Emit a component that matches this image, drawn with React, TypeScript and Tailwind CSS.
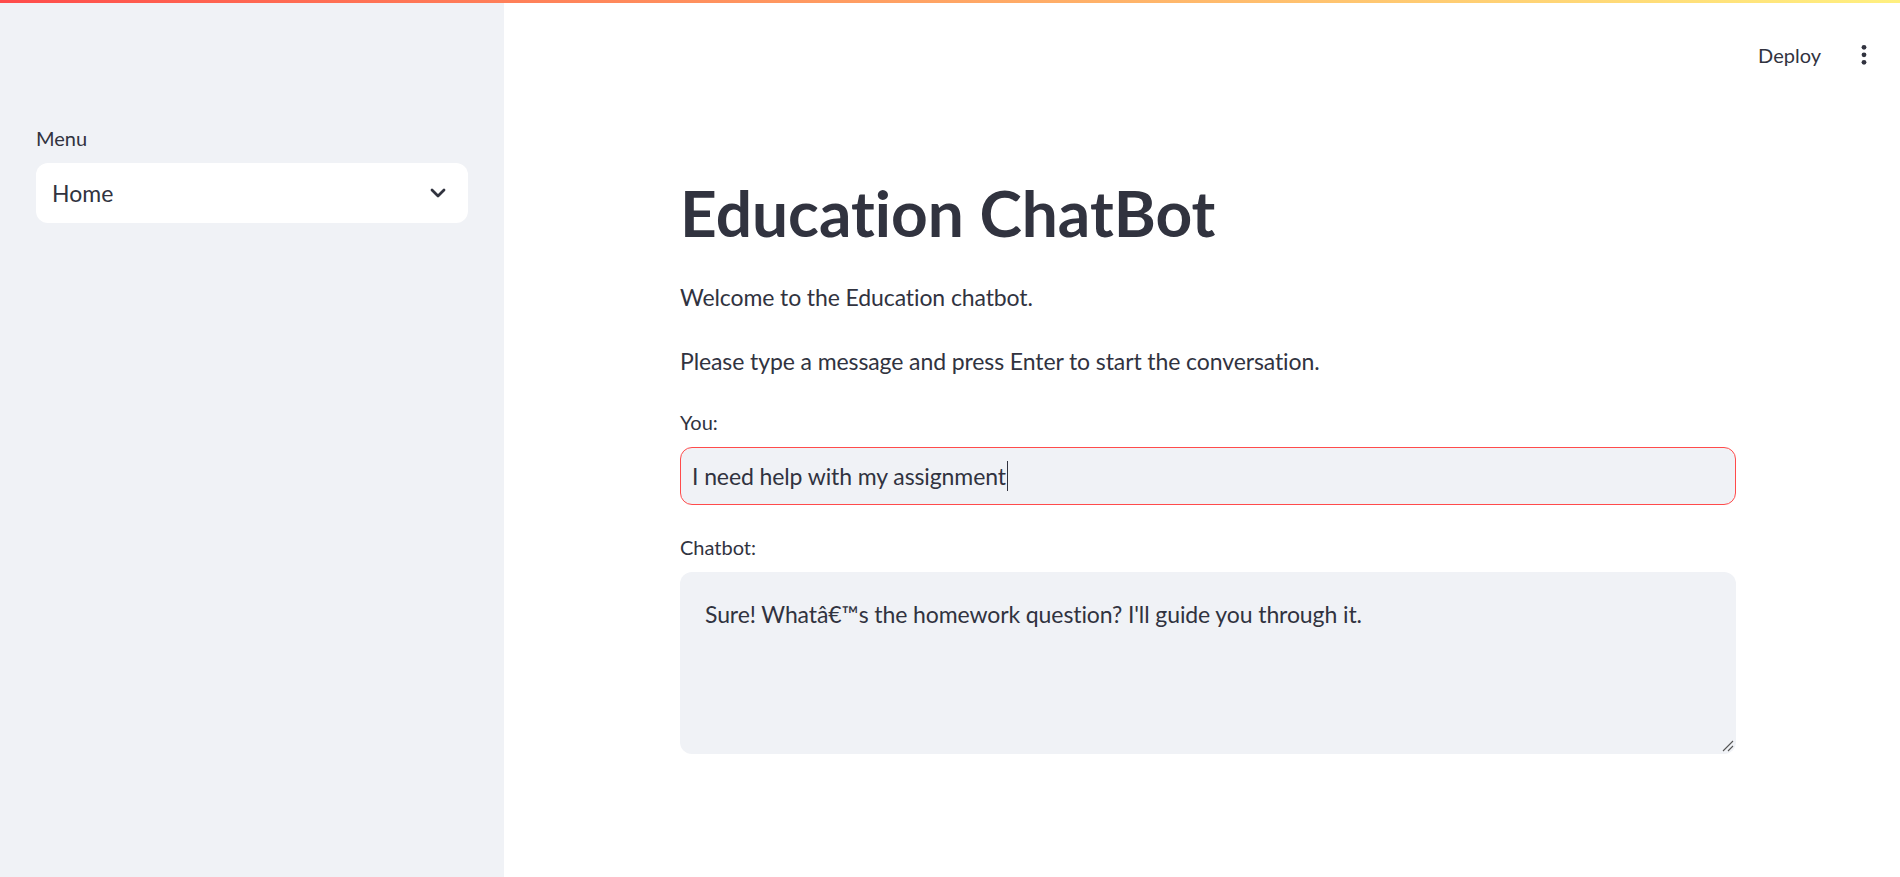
import React from "react";

const FONT = { fontFamily: "Lato, 'Noto Sans', sans-serif" };

function Chevron() {
  return (
    <svg width="16" height="11" viewBox="0 0 16 11" fill="none">
      <path d="M2 2 L8 8 L14 2" stroke="#31333f" strokeWidth="2.8" strokeLinecap="round" strokeLinejoin="round" />
    </svg>
  );
}

function Kebab() {
  return (
    <svg width="6" height="22" viewBox="0 0 6 22" fill="#31333f">
      <circle cx="3" cy="3.3" r="2.4" />
      <circle cx="3" cy="10.8" r="2.4" />
      <circle cx="3" cy="18.3" r="2.4" />
    </svg>
  );
}

function Grip() {
  return (
    <svg width="12" height="12" viewBox="0 0 12 12" fill="none">
      <path d="M1 11 L11 1" stroke="#555" strokeWidth="1.1" />
      <path d="M6 11 L11 6" stroke="#555" strokeWidth="1.1" />
    </svg>
  );
}

export default function App() {
  return (
    <div
      className="relative flex h-[877px] w-full overflow-hidden bg-white text-[#31333f] [font-variant-ligatures:none]"
      style={FONT}
    >
      <div className="absolute left-0 right-0 top-0 z-10 h-[3px] bg-gradient-to-r from-[#ff4b4b] to-[#fff080]" />

      <aside className="flex w-[504px] shrink-0 flex-col bg-[#f0f2f6] px-[36px] pt-[124px]">
        <div className="h-[28px] text-[20px] leading-[28px]">Menu</div>
        <div className="mt-[11px] flex h-[60px] w-[432px] items-center justify-between rounded-[12px] bg-white pl-[16px] pr-[22px]">
          <span className="text-[23px] leading-[30px]">Home</span>
          <Chevron />
        </div>
      </aside>

      <main className="flex flex-1 flex-col">
        <header className="flex h-[110px] shrink-0 items-center justify-end pr-[33px]">
          <span className="mr-[40px] text-[20px] leading-[28px]">Deploy</span>
          <Kebab />
        </header>

        <div className="flex justify-center pl-[12px]">
          <div className="flex w-[1056px] flex-col pt-[64px]">
            <h1 className="text-[64px] font-bold leading-[78px] [font-variant-ligatures:none]">Education ChatBot</h1>
            <p className="mt-[27px] text-[23px] leading-[36px] tracking-[-0.1px]">Welcome to the Education chatbot.</p>
            <p className="mt-[28px] text-[23px] leading-[36px] tracking-[-0.1px]">
              Please type a message and press Enter to start the conversation.
            </p>

            <div className="mt-[29px] h-[28px] text-[20px] leading-[28px]">You:</div>
            <div className="mt-[11px] flex h-[58px] items-center rounded-[12px] border border-[#ff4b4b] bg-[#f0f2f6] pl-[11px]">
              <span className="text-[23px] leading-[36px] tracking-[-0.1px]">I need help with my assignment</span>
              <span className="ml-[1px] h-[30px] w-[1px] bg-[#31333f]" />
            </div>

            <div className="mt-[28px] h-[28px] text-[20px] leading-[28px]">Chatbot:</div>
            <div className="relative mt-[11px] h-[182px] w-full">
              <textarea
                readOnly
                className="block h-full w-full resize-none rounded-[12px] bg-[#f0f2f6] px-[25px] pt-[24px] text-[23px] leading-[36px] tracking-[-0.1px] text-[#31333f] outline-none [font-variant-ligatures:none]"
                style={FONT}
                value={"Sure! Whatâ€™s the homework question? I'll guide you through it."}
              />
              <div className="pointer-events-none absolute bottom-[2px] right-[2px]">
                <Grip />
              </div>
            </div>
          </div>
        </div>
      </main>
    </div>
  );
}
